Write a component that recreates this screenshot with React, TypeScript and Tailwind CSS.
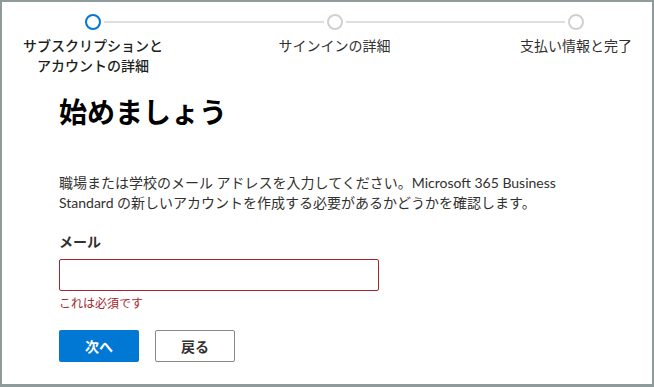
import React from "react";

const FONT = {
  fontFamily: 'Lato, "Noto Sans CJK JP", sans-serif',
};

function Circle({ active }: { active?: boolean }) {
  return (
    <div
      className={
        "h-4 w-4 shrink-0 rounded-full border-2 bg-white " +
        (active ? "border-[#0078d4]" : "border-[#d2d0ce]")
      }
    />
  );
}

function Stepper() {
  return (
    <div className="pt-[12px]">
      <div className="ml-[83px] flex w-[499px] items-center">
        <Circle active />
        <div className="mx-[3px] h-[2px] flex-1 bg-[#e1dfdd]" />
        <Circle />
        <div className="mx-[3px] h-[2px] flex-1 bg-[#e1dfdd]" />
        <Circle />
      </div>
      <div className="ml-[16px] mt-[6px] flex w-[633px] justify-between text-[14px] leading-[20px] text-[#323130]">
        <div className="w-[150px] text-center font-medium text-[#201f1e]">サブスクリプションとアカウントの詳細</div>
        <div className="w-[150px] text-center">サインインの詳細</div>
        <div className="w-[150px] text-center">支払い情報と完了</div>
      </div>
    </div>
  );
}

export default function App() {
  return (
    <div
      className="h-[387px] w-[654px] overflow-hidden border-l-2 border-r-2 border-t-2 border-b-[3px] border-[#8f9a9a] bg-white"
      style={FONT}
    >
      <Stepper />
      <main className="pl-[57px] pt-[18px]">
        <h1 className="text-[28px] font-bold leading-[36px] text-[#000]">始めましょう</h1>
        <p className="mt-[43px] w-[520px] text-[14px] leading-[20px] text-[#323130]">
          職場または学校のメール アドレスを入力してください。Microsoft 365 Business Standard の新しいアカウントを作成する必要があるかどうかを確認します。
        </p>
        <label className="mt-[19px] block text-[14px] font-semibold leading-[20px] text-[#323130]">メール</label>
        <input
          type="email"
          className="mt-[7px] block h-[32px] w-[320px] rounded-[2px] border border-[#a4262c] bg-white px-2 text-[14px] outline-none"
        />
        <p className="mt-[5px] text-[12px] leading-[16px] text-[#a4262c]">これは必須です</p>
        <div className="mt-[18px] flex gap-4">
          <button className="h-[32px] w-[80px] rounded-[2px] bg-[#0078d4] text-[14px] font-semibold text-white">
            次へ
          </button>
          <button className="h-[32px] w-[80px] rounded-[2px] border border-[#8a8886] bg-white text-[14px] font-semibold text-[#323130]">
            戻る
          </button>
        </div>
      </main>
    </div>
  );
}
